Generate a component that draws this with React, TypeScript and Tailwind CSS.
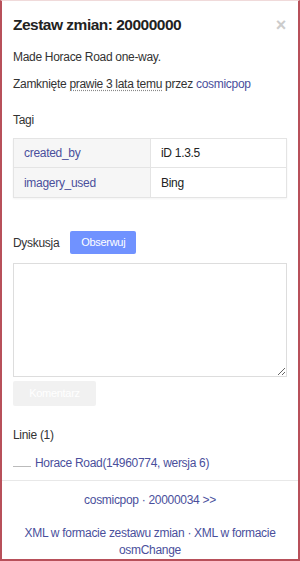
import { FC } from "react";

const font = { fontFamily: '"Liberation Sans", Arial, sans-serif' };

const TagRow: FC<{ k: string; v: string; last?: boolean }> = ({ k, v, last }) => (
  <div className={`flex h-[29px] items-center ${last ? "" : "border-b border-[#e4e4e4]"}`}>
    <div className="flex h-full w-[137px] items-center border-r border-[#e4e4e4] bg-[#f6f6f6] pl-[10px] text-[#4a4f9c]">
      {k}
    </div>
    <div className="pl-[10px] text-[#222]">{v}</div>
  </div>
);

export default function App() {
  return (
    <div
      style={font}
      className="flex h-[561px] w-[300px] flex-col overflow-hidden border-x-2 border-b-2 border-t border-x-[#b8505a] border-b-[#b8505a] border-t-[#f0dada] bg-white text-[12px] tracking-[-0.3px] text-[#333]"
    >
      <div className="flex items-start justify-between pl-[11px] pr-[12px] pt-[13px]">
        <h1 className="text-[15.5px] font-bold leading-[22px] tracking-[-0.5px] text-[#222]">
          Zestaw zmian: 20000000
        </h1>
        <span className="mt-[3px] text-[18px] font-bold leading-[16px] text-[#ccc]">×</span>
      </div>

      <div className="px-[11px]">
        <p className="mt-[12px] leading-[18px]">Made Horace Road one-way.</p>
        <p className="mt-[9px] leading-[18px]">
          Zamknięte{" "}
          <span className="underline decoration-dotted decoration-[#888] underline-offset-2">
            prawie 3 lata temu
          </span>{" "}
          przez <span className="text-[#4a4f9c]">cosmicpop</span>
        </p>

        <p className="mt-[18px] leading-[18px]">Tagi</p>
        <div className="mt-[9px] w-[274px] border border-[#e4e4e4] shadow-[0_1px_2px_rgba(0,0,0,0.05)]">
          <TagRow k="created_by" v="iD 1.3.5" />
          <TagRow k="imagery_used" v="Bing" last />
        </div>

        <div className="mt-[33px] flex items-center gap-[11px]">
          <span className="leading-[18px]">Dyskusja</span>
          <span className="flex h-[23px] w-[66px] items-center justify-center rounded-[2px] bg-[#7092ff] text-[11px] text-white">
            Obserwuj
          </span>
        </div>

        <textarea className="mt-[9px] block h-[114px] w-[274px] resize-y border border-[#ddd] outline-none" />
        <div className="mt-[4px] flex h-[25px] w-[83px] items-center justify-center rounded-[2px] bg-[#f1f1f1] text-[11px] text-white">
          Komentarz
        </div>

        <p className="mt-[20px] leading-[18px]">Linie (1)</p>
        <div className="mt-[10px] flex items-center gap-[4px]">
          <span className="mt-[6px] block h-[1px] w-[18px] bg-[#bbb]" />
          <span className="leading-[18px] text-[#4a4f9c]">Horace Road(14960774, wersja 6)</span>
        </div>
      </div>

      <div className="mt-[8px] border-t border-[#e8e8e8]" />
      <p className="mt-[10px] text-center leading-[18px] text-[#4a4f9c]">
        cosmicpop · 20000034 &gt;&gt;
      </p>
      <p className="mt-[16px] px-[20px] text-center leading-[17px] text-[#4a4f9c]">
        XML w formacie zestawu zmian · XML w formacie osmChange
      </p>
    </div>
  );
}
